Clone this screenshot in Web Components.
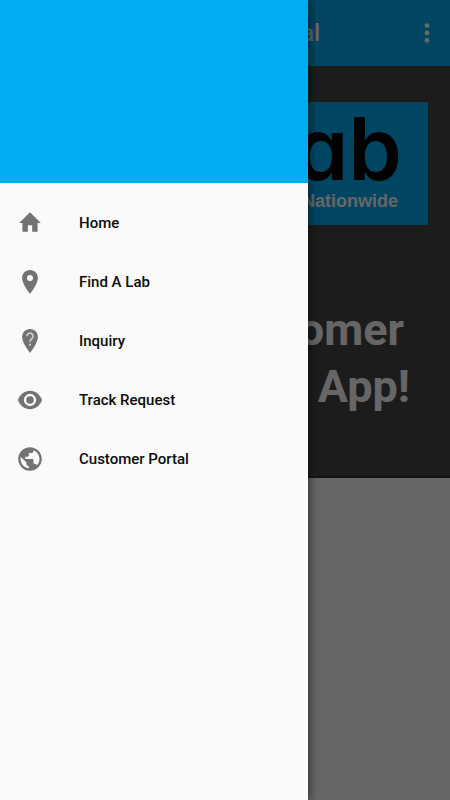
<!DOCTYPE html>
<html lang="en">
<head>
<meta charset="utf-8">
<meta name="viewport" content="width=device-width, initial-scale=1">
<title>Customer Portal</title>
<style>
  html, body { margin: 0; height: 100%; }
  body { font-family: Roboto, "Liberation Sans", sans-serif; background: #fff; }
</style>
</head>
<body>
<portal-app></portal-app>
<script>
const define = (name, html) => {
  const template = document.createElement('template');
  template.innerHTML = html;
  customElements.define(name, class extends HTMLElement {
    constructor() {
      super();
      this.attachShadow({ mode: 'open' }).append(template.content.cloneNode(true));
    }
  });
};

define('app-bar', `
  <style>
    :host { display: flex; align-items: center; height: 66px; background: #00adf2; color: #fff; }
    h1 { flex: 1; margin: 0; padding-right: 84px; font-size: 24px; line-height: 32px; font-weight: 500; text-align: right; }
    button { border: 0; background: none; color: inherit; padding: 0; width: 46px; height: 48px; display: grid; place-items: center; }
    svg { display: block; fill: currentColor; }
  </style>
  <h1><slot></slot></h1>
  <button type="button" aria-label="More options">
    <svg width="6" height="20" viewBox="0 0 6 20"><circle cx="3" cy="2.6" r="2.4"/><circle cx="3" cy="10" r="2.4"/><circle cx="3" cy="17.4" r="2.4"/></svg>
  </button>`);

define('brand-logo', `
  <style>
    :host { display: flex; flex-direction: column; align-items: flex-end; box-sizing: border-box; height: 123px; padding: 7px 30px 0 0; background: #00adf2; }
    .name { margin-right: -4px; font: 600 86px/80px Inter, sans-serif; font-feature-settings: "cv11"; color: #000; }
    .tag { font: 700 18px/24px "Liberation Sans", sans-serif; color: #fff; }
  </style>
  <span class="name"><slot name="name"></slot></span>
  <span class="tag"><slot></slot></span>`);

define('welcome-panel', `
  <style>
    :host { display: block; box-sizing: border-box; height: 412px; padding: 36px 22px 0; background: #484848; color: #fff; border-bottom: 2px solid #303030; }
    h2 { margin: 76px 18px 0 0; font-size: 45px; line-height: 57px; font-weight: 700; text-align: right; }
    span { display: block; }
    .first { padding-right: 6px; }
  </style>
  <brand-logo><span slot="name">Lab</span>Nationwide</brand-logo>
  <h2><span class="first">Customer</span><span>App!</span></h2>`);

define('nav-item', `
  <style>
    :host { display: block; }
    a { display: flex; align-items: center; gap: 36px; height: 59px; padding-left: 17px; color: #0c0c0c; text-decoration: none; font-size: 15px; line-height: 24px; font-weight: 500; }
    ::slotted(svg) { display: block; width: 26px; height: 26px; fill: #737373; flex: none; }
  </style>
  <a href="#"><slot name="icon"></slot><span><slot></slot></span></a>`);

define('nav-drawer', `
  <style>
    :host { display: block; background: #fafafa; box-shadow: 2px 0 8px rgba(0,0,0,.5); }
    header { height: 183px; background: #00adf2; }
    nav { padding-top: 10px; }
  </style>
  <header></header>
  <nav aria-label="Main">
    <nav-item><svg slot="icon" viewBox="0 0 24 24"><path d="M10 20v-6h4v6h5v-8h3L12 2 2 12h3v8z"/></svg>Home</nav-item>
    <nav-item><svg slot="icon" viewBox="0 0 24 24"><path d="M12 1C7.9 1 4.700 4.300 4.700 8.400 4.700 14 12 23 12 23s7.300-9 7.300-14.600C19.300 4.300 16.100 1 12 1zm0 10.200a2.800 2.800 0 1 1 0-5.600 2.800 2.800 0 0 1 0 5.600z"/></svg>Find A Lab</nav-item>
    <nav-item><svg slot="icon" viewBox="0 0 24 24"><path d="M12 1C7.900 1 4.700 4.300 4.700 8.400 4.700 14 12 23 12 23s7.300-9 7.300-14.600C19.300 4.300 16.100 1 12 1z"/><path d="M9.200 7.600a2.800 2.800 0 1 1 4.700 2c-1 .9-1.900 1.400-1.900 3.200" fill="none" stroke="#ccc" stroke-width="1.600"/><circle cx="12" cy="15.400" r="1" fill="#ccc"/></svg>Inquiry</nav-item>
    <nav-item><svg slot="icon" viewBox="0 0 24 24"><path d="M12 3.500C6.900 3.500 2.600 7 .9 12c1.700 5 6 8.500 11.100 8.500S21.400 17 23.100 12C21.400 7 17.100 3.500 12 3.500zm0 14.200a5.700 5.700 0 1 1 0-11.400 5.700 5.700 0 0 1 0 11.400zm0-9.200a3.500 3.500 0 1 0 0 7 3.500 3.500 0 0 0 0-7z"/></svg>Track Request</nav-item>
    <nav-item><svg slot="icon" viewBox="1 1 22 22"><path d="M12 2C6.480 2 2 6.480 2 12s4.480 10 10 10 10-4.480 10-10S17.520 2 12 2zm-1 17.930c-3.950-.49-7-3.850-7-7.930 0-.62.080-1.210.21-1.790L9 15v1c0 1.100.9 2 2 2v1.930zm6.900-2.540c-.26-.81-1-1.390-1.900-1.390h-1v-3c0-.55-.45-1-1-1H8v-2h2c.55 0 1-.45 1-1V7h2c1.100 0 2-.9 2-2v-.41c2.930 1.190 5 4.060 5 7.410 0 2.080-.8 3.970-2.100 5.390z"/></svg>Customer Portal</nav-item>
  </nav>`);

define('portal-app', `
  <style>
    :host { display: block; position: relative; min-height: 100vh; overflow: hidden; }
    .scrim { position: absolute; inset: 0; background: rgba(0,0,0,.6); }
    nav-drawer { position: absolute; inset: 0 auto 0 0; width: 68.4%; }
  </style>
  <app-bar>Customer Portal</app-bar>
  <welcome-panel></welcome-panel>
  <div class="scrim"></div>
  <nav-drawer></nav-drawer>`);
</script>
</body>
</html>
